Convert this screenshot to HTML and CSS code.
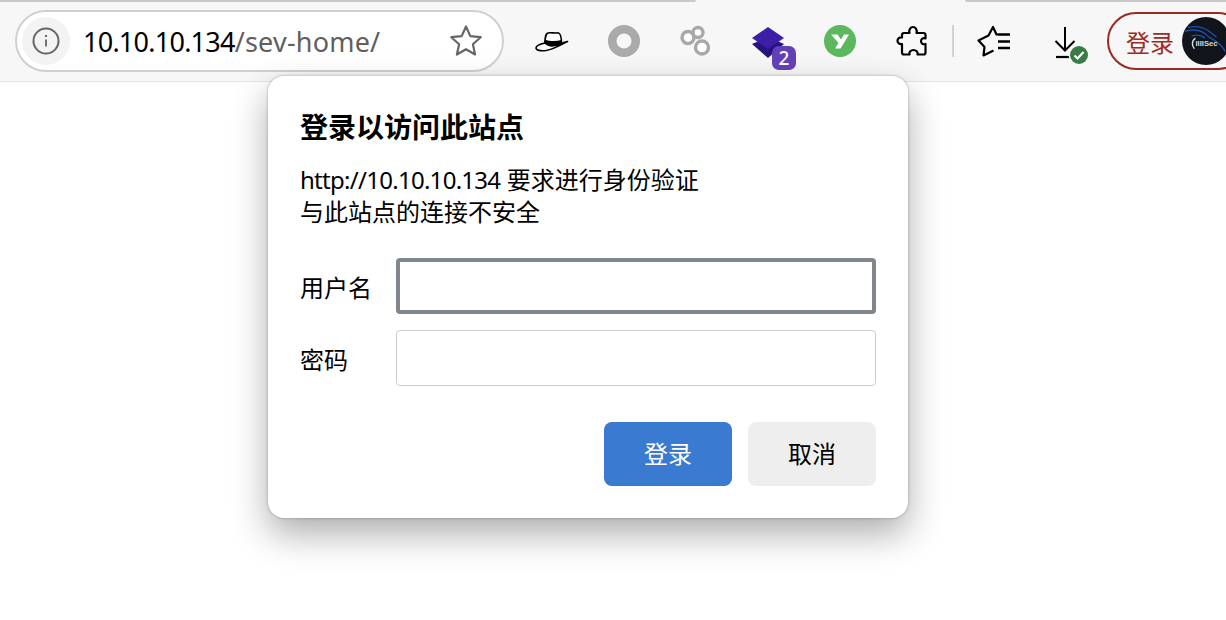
FILE: index.html
```html
<!DOCTYPE html>
<html lang="zh-CN">
<head>
    <meta charset="UTF-8">
    <title>10.10.10.134/sev-home/</title>
    <link rel="stylesheet" href="styles.css">
</head>
<body>

    <!-- Tab strip edge -->
    <div class="tab-edge">
        <div class="tab-edge-left"></div>
        <div class="tab-edge-right"></div>
    </div>

    <div class="toolbar">
        <div class="address-bar">
            <div class="site-info">
                <svg width="28" height="28" viewBox="0 0 28 28" fill="none" stroke="#666" stroke-width="2">
                    <circle cx="14" cy="14" r="12.5"/>
                    <path d="M14 12.5v7" stroke-width="1.8"/>
                    <path d="M14 8v2" stroke-width="2"/>
                </svg>
            </div>
            <div class="url"><span class="url-host">10.10.10.134</span><span class="url-path">/sev-home/</span></div>
            <svg class="star" width="34" height="34" viewBox="0 0 34 34" fill="none" stroke="#666" stroke-width="2.2" stroke-linejoin="round">
                <path d="M17 2.5l4.3 9.6 10.4 1.1-7.8 7 2.2 10.3-9.1-5.3-9.1 5.3 2.2-10.3-7.8-7 10.400-1.100z"/>
            </svg>
        </div>

        <!-- Extensions -->
        <div class="tool">
            <svg width="34" height="22" viewBox="0 0 34 22">
                <path d="M10 14C10 7 10.500 3 14 2.800 17 2.500 20 3.500 23 2.800 25.500 3 26.500 8 26.500 14z" fill="#fff" stroke="#000" stroke-width="1.600"/>
                <path d="M9.700 9.500C15 11.500 21 11.500 26.500 10L27 14.500C21 16 15 16.500 9 15z" fill="#000"/>
                <path d="M10 13C5 14 1 16 1 18 1 20.500 6 21 11 20.500 18 19.500 26 15 32.500 11.500L27 13C21 16 14 17 10 13z" fill="#fff" stroke="#000" stroke-width="1.600" stroke-linejoin="round"/>
            </svg>
        </div>
        <div class="tool">
            <svg width="34" height="34" viewBox="0 0 34 34" fill="none">
                <circle cx="17" cy="17" r="11.800" stroke="#aaa" stroke-width="8.500"/>
            </svg>
        </div>
        <div class="tool">
            <svg class="blur-icon" width="34" height="34" viewBox="0 0 34 34" fill="#fff" stroke="#a8a8a8" stroke-width="3.400">
                <circle cx="19" cy="8.500" r="5"/>
                <circle cx="9" cy="13.500" r="6"/>
                <circle cx="23" cy="23.500" r="6.500"/>
            </svg>
        </div>
        <div class="tool">
            <div class="layers">
                <svg width="34" height="34" viewBox="0 0 34 34">
                    <path d="M1 18l16-7 16 7-16 14z" fill="#28127f"/>
                    <path d="M17 1l16 11-16 11L1 12z" fill="#3c1fa6"/>
                </svg>
                <span class="count-badge">2</span>
            </div>
        </div>
        <div class="tool">
            <svg width="32" height="32" viewBox="0 0 32 32">
                <circle cx="16" cy="16" r="16" fill="#5cb85c"/>
                <path d="M7 9.500h6.500l3.500 5 3-5h5L16.500 23.500H11l3.500-5.500z" fill="#fff"/>
            </svg>
        </div>
        <div class="tool">
            <svg width="32" height="32" viewBox="0 0 32 32" fill="none" stroke="#000" stroke-width="2.200" stroke-linejoin="round">
                <path d="M13.500 8c-1-3 1-6 3.500-6s4.500 3 3.500 6h7a2 2 0 0 1 2 2v3.500c-2.500-1-4.500.5-4.500 2.700s2 3.700 4.500 2.700v8.600a2 2 0 0 1-2 2h-6c.8-2.500-1.500-4.500-4-4.500s-4.800 2-4 4.500H8a2 2 0 0 1-2-2v-8.500c-2.500.5-4.500-1-4.500-3.200s2-3.800 4.500-3.300V10a2 2 0 0 1 2-2z"/>
            </svg>
        </div>
        <div class="tool-divider"></div>
        <div class="tool">
            <svg width="34" height="32" viewBox="0 0 34 32" fill="none" stroke="#000" stroke-width="2.200" stroke-linejoin="round">
                <path d="M21 9.500h-1.500L16 2l-4.500 8.500-10 5 6 6.500-1 8.500 10-5"/>
                <path d="M21 9.500h12M21 16.500h12M21 23h12" stroke-width="2.400"/>
            </svg>
        </div>
        <div class="tool">
            <div class="download">
                <svg width="26" height="34" viewBox="0 0 26 34" fill="none" stroke="#000" stroke-width="2">
                    <path d="M12 0v23M2.500 14l9.500 9.500 9.500-9.500"/>
                    <path d="M3 30h18" stroke-width="2.200"/>
                </svg>
                <svg class="done-badge" width="22" height="22" viewBox="0 0 22 22">
                    <circle cx="11" cy="11" r="10.500" fill="#f7f7f7"/>
                    <circle cx="11" cy="11" r="9" fill="#3a7d44"/>
                    <path d="M6.500 11.500l3 3 6-6.500" fill="none" stroke="#fff" stroke-width="2.200"/>
                </svg>
            </div>
        </div>

        <div class="profile">
            <span class="profile-label">登录</span>
            <svg class="avatar" width="48" height="48" viewBox="0 0 50 50">
                <circle cx="25" cy="25" r="25" fill="#12141c"/>
                <g fill="none" stroke="#1c4fae" stroke-width="1.400">
                    <path d="M3 15c10-3 19-1 25 6 5 3 13 6 17 15"/>
                    <path d="M6 11c8-2 15-1 21 3 3 2 6 5 9 7"/>
                    <path d="M10 20c5-2 10-1 14 2"/>
                </g>
                <path d="M13 33a7 7 0 0 1 1-11" fill="none" stroke="#ddd" stroke-width="1.500"/>
                <text class="avatar-text" x="14" y="30">IIIISec</text>
            </svg>
        </div>
    </div>

    <!-- Sign in dialog -->
    <div class="dialog">
        <h1 class="dialog-title">登录以访问此站点</h1>
        <p class="dialog-text"><span class="latin">http://10.10.10.134</span> 要求进行身份验证<br>与此站点的连接不安全</p>
        <div class="field">
            <label class="field-label">用户名</label>
            <input class="field-input field-focus" type="text">
        </div>
        <div class="field">
            <label class="field-label">密码</label>
            <input class="field-input" type="password">
        </div>
        <div class="dialog-actions">
            <button class="btn btn-primary">登录</button>
            <button class="btn">取消</button>
        </div>
    </div>

</body>
</html>
```

FILE: styles.css
```css
body {
    margin: 0;
    height: 620px;
    overflow: hidden;
    background-color: #ffffff;
    font-family: "Noto Sans", "Noto Sans CJK SC", sans-serif;
    color: #000000;
}

.tab-edge {
    display: flex;
    justify-content: space-between;
    height: 2px;
    background-color: #f7f7f7;
}

.tab-edge-left {
    width: 696px;
    background-color: #c9c9c9;
    border-bottom-right-radius: 2px;
}

.tab-edge-right {
    width: 261px;
    background-color: #c9c9c9;
    border-bottom-left-radius: 2px;
}

.toolbar {
    display: flex;
    align-items: center;
    height: 80px;
    padding: 0 0 1px 15px;
    background-color: #f7f7f7;
    border-bottom: 1px solid #e6e6e6;
    box-sizing: border-box;
    overflow: hidden;
}

.address-bar {
    display: flex;
    align-items: center;
    flex: none;
    width: 489px;
    height: 62px;
    margin-right: 12px;
    padding: 0 19px 0 5px;
    box-sizing: border-box;
    background-color: #ffffff;
    border: 2px solid #d0d0d0;
    border-radius: 31px;
}

.site-info {
    display: flex;
    justify-content: center;
    align-items: center;
    flex: none;
    width: 48px;
    height: 48px;
    border-radius: 50%;
    background-color: #f3f3f3;
}

.url {
    flex: 1;
    margin-left: 13px;
    font-size: 27px;
    white-space: nowrap;
}

.url-host {
    color: #000000;
    letter-spacing: -0.75px;
}

.url-path {
    color: #5f5f5f;
    letter-spacing: 0.2px;
}

.star {
    flex: none;
}

.tool {
    display: flex;
    justify-content: center;
    align-items: center;
    flex: none;
    width: 72px;
    height: 60px;
}

.tool-divider {
    flex: none;
    width: 2px;
    height: 32px;
    margin: 0 4px;
    background-color: #d2d2d2;
}

.blur-icon {
    filter: blur(0.6px);
}

.layers {
    position: relative;
    width: 34px;
    height: 34px;
    margin-top: 3px;
}

.count-badge {
    position: absolute;
    top: 20px;
    left: 21px;
    width: 24px;
    height: 24px;
    border-radius: 7px;
    background-color: #6340b8;
    color: #ffffff;
    font-size: 19px;
    font-weight: 500;
    line-height: 24px;
    text-align: center;
}

.download {
    position: relative;
    width: 26px;
    height: 34px;
    margin-top: 5px;
    margin-left: -1px;
}

.done-badge {
    position: absolute;
    top: 17px;
    left: 15px;
}

.profile {
    display: flex;
    align-items: center;
    flex: none;
    width: 140px;
    height: 58px;
    margin-left: 5px;
    padding-left: 17px;
    box-sizing: border-box;
    border: 2px solid #9c2a20;
    border-radius: 29px;
}

.profile-label {
    color: #a02a20;
    font-size: 24px;
}

.avatar {
    flex: none;
    margin-left: 8px;
}

.avatar-text {
    fill: #d8d8d8;
    font-size: 8px;
    font-weight: 700;
    font-family: "Liberation Sans", sans-serif;
}

.dialog {
    position: absolute;
    top: 76px;
    left: 268px;
    width: 640px;
    padding: 32px;
    box-sizing: border-box;
    background-color: #ffffff;
    border-radius: 16px;
    box-shadow: 0 0 3px rgba(0, 0, 0, 0.3), 0 16px 36px rgba(0, 0, 0, 0.32);
}

.dialog-title {
    margin: 0 0 18px;
    font-size: 28px;
    font-weight: 700;
    line-height: 38px;
}

.dialog-text {
    margin: 0 0 30px;
    font-size: 24px;
    line-height: 32px;
}

.latin {
    letter-spacing: -0.72px;
}

.field {
    display: flex;
    align-items: center;
    margin-bottom: 16px;
}

.field-label {
    flex: none;
    width: 96px;
    font-size: 24px;
}

.field-input {
    flex: 1;
    height: 56px;
    box-sizing: border-box;
    border: 1px solid #cccccc;
    border-radius: 4px;
    background-color: #ffffff;
}

.field-focus {
    border: 4px solid #80868b;
}

.dialog-actions {
    display: flex;
    justify-content: flex-end;
    gap: 16px;
    margin-top: 36px;
}

.btn {
    width: 128px;
    height: 64px;
    padding: 0 0 4px;
    border: none;
    border-radius: 8px;
    background-color: #eeeeee;
    color: #000000;
    font-family: inherit;
    font-size: 24px;
}

.btn-primary {
    background-color: #3a7ad0;
    color: #ffffff;
}
```
